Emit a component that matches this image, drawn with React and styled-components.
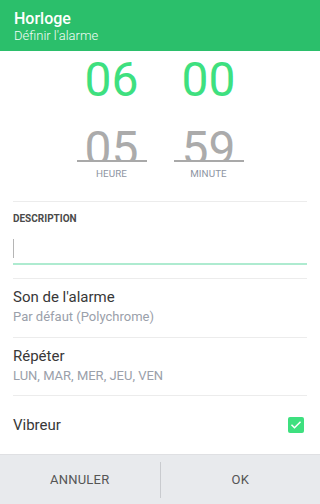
import React from 'react';
import styled, { createGlobalStyle } from 'styled-components';

const GlobalStyle = createGlobalStyle`
  * { box-sizing: border-box; }
  body {
    margin: 0;
    background: #ffffff;
    font-family: Roboto, "Noto Sans", "Liberation Sans", sans-serif;
  }
`;

const Screen = styled.div`
  width: 320px;
  height: 504px;
  display: flex;
  flex-direction: column;
  background: #ffffff;
  overflow: hidden;
`;

const Header = styled.header`
  height: 51px;
  flex-shrink: 0;
  background: #2bbf6b;
  padding: 9px 14px 0;
  color: #ffffff;
`;

const AppTitle = styled.div`
  font-size: 16px;
  font-weight: 500;
  line-height: 19px;
`;

const Subtitle = styled.div`
  font-size: 13px;
  font-weight: 300;
  line-height: 16px;
  opacity: 0.95;
`;

const Body = styled.div`
  flex: 1;
  display: flex;
  flex-direction: column;
  padding: 0 13px;
`;

const Picker = styled.div`
  display: flex;
  justify-content: center;
  gap: 27px;
  padding: 5px 0 21px;
`;

const Column = styled.div`
  width: 70px;
  display: flex;
  flex-direction: column;
  align-items: center;
`;

const Digits = styled.div`
  font-size: 48px;
  line-height: 48px;
  color: ${props => props.muted ? '#ababab' : '#3ee07f'};
  text-align: center;
`;

const PrevWindow = styled.div`
  width: 100%;
  height: 37px;
  margin-top: 21px;
  overflow: hidden;
  border-bottom: 2px solid #a9a9a9;
`;

const UnitLabel = styled.div`
  margin-top: 6px;
  font-size: 9.8px;
  line-height: 12px;
  color: #8d94a2;
  letter-spacing: 0.1px;
`;

const Section = styled.div`
  border-top: 1px solid #ececec;
  padding: ${props => props.pad || '0'};
`;

const FieldLabel = styled.div`
  font-size: 10px;
  font-weight: 700;
  line-height: 12px;
  color: #4a4a4a;
`;

const Field = styled.div`
  margin-top: 12px;
  height: 28px;
  border-bottom: 2px solid #aeebd0;
  display: flex;
  align-items: flex-start;
  padding-top: 2px;
`;

const Caret = styled.span`
  width: 1px;
  height: 19px;
  background: #b5b5b5;
`;

const RowTitle = styled.div`
  font-size: 15px;
  line-height: 18px;
  color: #383838;
`;

const RowValue = styled.div`
  margin-top: 3px;
  font-size: 13px;
  line-height: 16px;
  color: #9aa0aa;
`;

const ToggleRow = styled(Section)`
  flex: 1;
  display: flex;
  align-items: center;
  justify-content: space-between;
  padding-right: 3px;
`;

const Checkbox = styled.span`
  width: 16px;
  height: 16px;
  border-radius: 2px;
  background: #3ee07f;
  display: flex;
  align-items: center;
  justify-content: center;
`;

const Footer = styled.div`
  height: 50px;
  flex-shrink: 0;
  display: flex;
  align-items: center;
  background: #e8eaed;
  border-top: 1px solid #dfe0e3;
`;

const FooterButton = styled.button`
  flex: 1;
  height: 100%;
  border: none;
  background: transparent;
  font-family: inherit;
  font-size: 13px;
  color: #555555;
  letter-spacing: 0.2px;
  cursor: pointer;
`;

const FooterDivider = styled.span`
  width: 1px;
  height: 36px;
  background: #c9cbcf;
`;

const TimeColumn = ({ current, previous, label }) => (
  <Column>
    <Digits>{current}</Digits>
    <PrevWindow>
      <Digits muted>{previous}</Digits>
    </PrevWindow>
    <UnitLabel>{label}</UnitLabel>
  </Column>
);

const App = () => (
  <>
    <GlobalStyle />
    <Screen>
      <Header>
        <AppTitle>Horloge</AppTitle>
        <Subtitle>Définir l'alarme</Subtitle>
      </Header>
      <Body>
        <Picker>
          <TimeColumn current="06" previous="05" label="HEURE" />
          <TimeColumn current="00" previous="59" label="MINUTE" />
        </Picker>
        <Section pad="11px 0 13px">
          <FieldLabel>DESCRIPTION</FieldLabel>
          <Field>
            <Caret />
          </Field>
        </Section>
        <Section pad="9px 0 12px">
          <RowTitle>Son de l'alarme</RowTitle>
          <RowValue>Par défaut (Polychrome)</RowValue>
        </Section>
        <Section pad="9px 0 11px">
          <RowTitle>Répéter</RowTitle>
          <RowValue>LUN, MAR, MER, JEU, VEN</RowValue>
        </Section>
        <ToggleRow>
          <RowTitle>Vibreur</RowTitle>
          <Checkbox>
            <svg width="12" height="12" viewBox="0 0 24 24" fill="none" stroke="#ffffff" strokeWidth="3" strokeLinecap="square">
              <path d="M4 12.5l5 5L20 6.5" />
            </svg>
          </Checkbox>
        </ToggleRow>
      </Body>
      <Footer>
        <FooterButton>ANNULER</FooterButton>
        <FooterDivider />
        <FooterButton>OK</FooterButton>
      </Footer>
    </Screen>
  </>
);

export default App;
